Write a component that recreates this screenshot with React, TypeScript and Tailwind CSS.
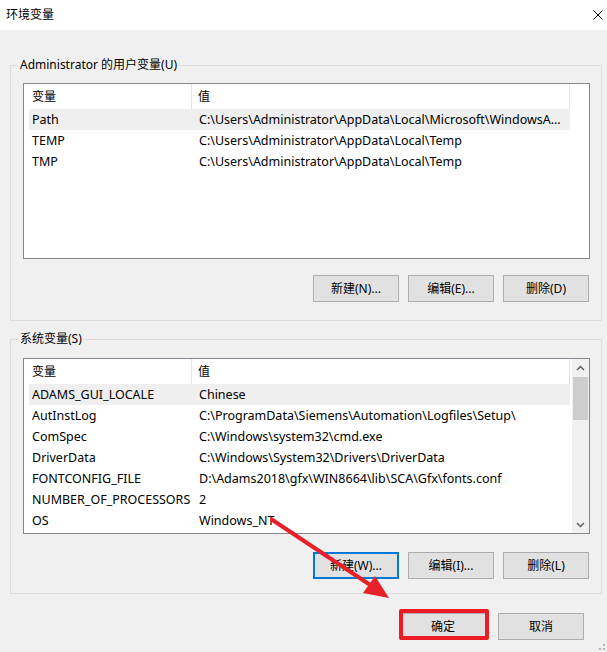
import type { ReactNode } from "react";

interface EnvVar {
  name: string;
  value: string;
}

const userVars: EnvVar[] = [
  { name: "Path", value: "C:\\Users\\Administrator\\AppData\\Local\\Microsoft\\WindowsApps;" },
  { name: "TEMP", value: "C:\\Users\\Administrator\\AppData\\Local\\Temp" },
  { name: "TMP", value: "C:\\Users\\Administrator\\AppData\\Local\\Temp" }
];

const systemVars: EnvVar[] = [
  { name: "ADAMS_GUI_LOCALE", value: "Chinese" },
  { name: "AutInstLog", value: "C:\\ProgramData\\Siemens\\Automation\\Logfiles\\Setup\\" },
  { name: "ComSpec", value: "C:\\Windows\\system32\\cmd.exe" },
  { name: "DriverData", value: "C:\\Windows\\System32\\Drivers\\DriverData" },
  { name: "FONTCONFIG_FILE", value: "D:\\Adams2018\\gfx\\WIN8664\\lib\\SCA\\Gfx\\fonts.conf" },
  { name: "NUMBER_OF_PROCESSORS", value: "2" },
  { name: "OS", value: "Windows_NT" }
];

const WinButton = ({ children, focused = false }: { children: ReactNode; focused?: boolean }) => (
  <button
    type="button"
    className={[
      "flex h-[27px] w-[86px] items-center justify-center bg-[#e1e1e1] text-[12px] text-black",
      focused ? "border-2 border-[#0078d7]" : "border border-[#adadad]"
    ].join(" ")}
  >
    {children}
  </button>
);

const VarList = ({ rows, scrollable = false }: { rows: EnvVar[]; scrollable?: boolean }) => (
  <div className="flex h-[176px] border border-[#828790] bg-white">
    <div className="flex w-[546px] flex-col pl-[5px]">
      <div className="flex h-[25px] shrink-0 items-center">
        <div className="h-full w-[163px] border-r border-[#e5e5e5] pl-[3px] leading-[26px]">变量</div>
        <div className="h-full w-[378px] border-r border-[#e5e5e5] pl-[6px] leading-[26px]">值</div>
      </div>
      {rows.map((row, i) => (
        <div
          key={row.name}
          className={[
            "flex h-[21px] shrink-0 items-center pt-[1px] text-[12.5px]",
            i === 0 ? "bg-[#efefef]" : ""
          ].join(" ")}
        >
          <div className="w-[164px] overflow-hidden whitespace-nowrap pl-[3px]">{row.name}</div>
          <div className="w-[377px] overflow-hidden text-ellipsis whitespace-nowrap pl-[6px] pr-[4px]">
            {row.value}
          </div>
        </div>
      ))}
    </div>
    {scrollable ? (
      <div className="ml-auto flex w-[17px] flex-col items-center bg-[#f0f0f0]">
        <svg className="mt-[5px]" width="9" height="9" viewBox="0 0 9 9">
          <polyline points="1,6 4.5,2.5 8,6" fill="none" stroke="#606060" strokeWidth="1.5" />
        </svg>
        <div className="mt-[4px] h-[43px] w-[15px] bg-[#cdcdcd]" />
        <svg className="mb-[4px] mt-auto" width="9" height="9" viewBox="0 0 9 9">
          <polyline points="1,3 4.5,6.5 8,3" fill="none" stroke="#606060" strokeWidth="1.5" />
        </svg>
      </div>
    ) : null}
  </div>
);

export default function App() {
  return (
    <div className="relative h-[652px] w-[607px] overflow-hidden bg-[#f0f0f0] font-['Noto_Sans','Noto_Sans_CJK_SC',sans-serif] text-[12px] text-black">
      <div className="flex h-[30px] items-center justify-between bg-white pl-[6px] pr-[4px]">
        <span className="text-[12px]">环境变量</span>
        <svg width="10" height="10" viewBox="0 0 10 10">
          <path d="M0.5 0.5 L9.5 9.5 M9.5 0.5 L0.5 9.5" stroke="#000" strokeWidth="1" />
        </svg>
      </div>

      <div className="flex flex-col pl-[10px] pr-[5px] pt-[27px]">
        <fieldset className="border border-[#dcdcdc] pb-[18px] pl-[12px] pr-[11px] pt-[10px]">
          <legend className="-ml-[5px] px-[2px] leading-[16px]">Administrator 的用户变量(U)</legend>
          <VarList rows={userVars} />
          <div className="mt-[16px] flex justify-end gap-[9px] pr-[1px]">
            <WinButton>新建(N)...</WinButton>
            <WinButton>编辑(E)...</WinButton>
            <WinButton>删除(D)</WinButton>
          </div>
        </fieldset>

        <fieldset className="mt-[10px] border border-[#dcdcdc] pb-[14px] pl-[12px] pr-[11px] pt-[11px]">
          <legend className="-ml-[5px] px-[2px] leading-[16px]">系统变量(S)</legend>
          <VarList rows={systemVars} scrollable />
          <div className="mt-[18px] flex justify-end gap-[9px] pr-[1px]">
            <WinButton focused>新建(W)...</WinButton>
            <WinButton>编辑(I)...</WinButton>
            <WinButton>删除(L)</WinButton>
          </div>
        </fieldset>

        <div className="mt-[19px] flex justify-end gap-[12px] pr-[18px]">
          <WinButton>确定</WinButton>
          <WinButton>取消</WinButton>
        </div>
      </div>

      {/* red highlight around the OK button */}
      <div className="pointer-events-none absolute left-[399px] top-[609px] h-[31px] w-[90px] rounded-[2px] border-[4px] border-[#ed1c24]" />

      {/* red pointer arrow */}
      <svg className="pointer-events-none absolute left-0 top-0" width="607" height="652" viewBox="0 0 607 652">
        <line x1="271" y1="519" x2="371" y2="585.5" stroke="#e8202a" strokeWidth="4" />
        <polygon points="389,598 363,593 375,576" fill="#e8202a" />
      </svg>

      {/* size grip */}
      <svg className="pointer-events-none absolute bottom-[2px] right-[2px]" width="6" height="6" viewBox="0 0 6 6">
        <rect x="4" y="0" width="2" height="2" fill="#b4b4b4" />
        <rect x="4" y="4" width="2" height="2" fill="#b4b4b4" />
        <rect x="0" y="4" width="2" height="2" fill="#b4b4b4" />
      </svg>
    </div>
  );
}
